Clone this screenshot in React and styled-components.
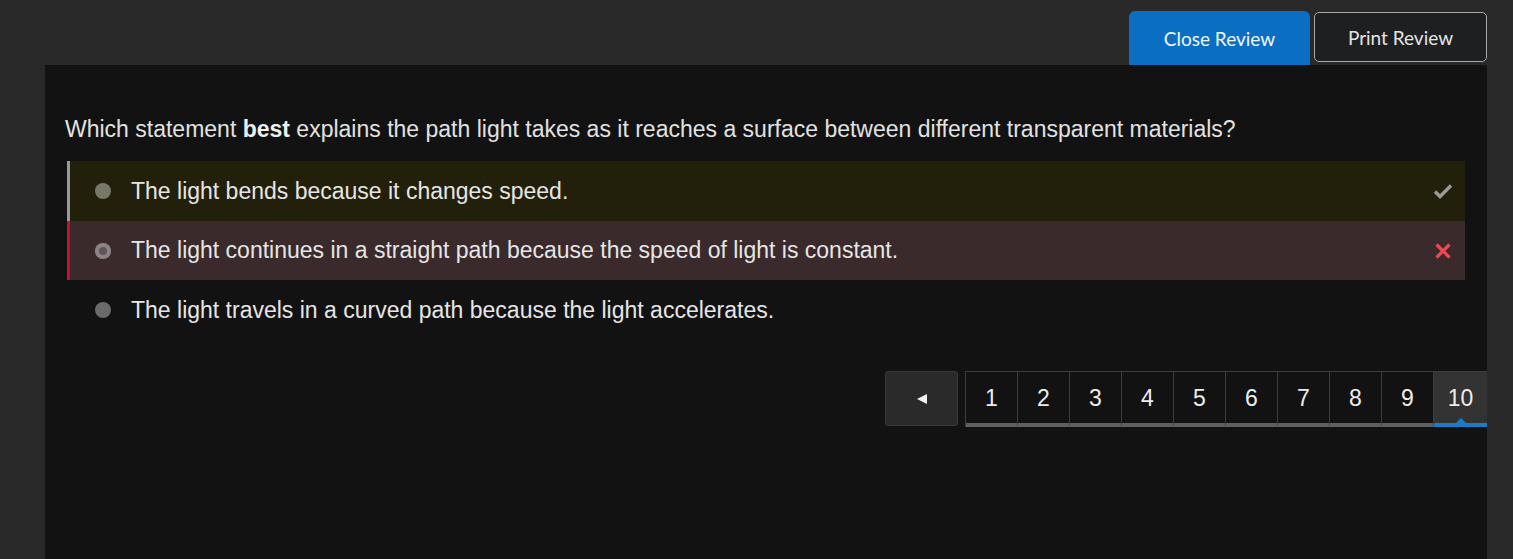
import React from 'react'
import styled, { createGlobalStyle } from 'styled-components'

const GlobalStyle = createGlobalStyle`
  html, body {
    margin: 0;
    padding: 0;
    background: #292929;
    height: 100%;
  }
  #root {
    min-height: 100%;
  }
`

const Page = styled.div`
  display: flex;
  flex-direction: column;
  min-height: 559px;
  background: #292929;
  font-family: "Liberation Sans", Arial, sans-serif;
`

const TopBar = styled.div`
  display: flex;
  justify-content: flex-end;
  align-items: flex-start;
  gap: 4px;
  padding: 11px 26px 0 0;
  height: 65px;
  box-sizing: border-box;
`

const ReviewButton = styled.button`
  font-family: Lato, "Open Sans", sans-serif;
  font-size: 19px;
  border-radius: 5px;
  cursor: pointer;
  box-sizing: border-box;
  ${p => p.primary ? `
    width: 181px;
    height: 54px;
    background: #0a6fc2;
    color: #f2f6fa;
    border: none;
    border-radius: 6px 6px 0 0;
  ` : `
    margin-top: 1px;
    width: 173px;
    height: 50px;
    background: #1e1f21;
    color: #e4e4e4;
    border: 1px solid #a8a8a8;
  `}
`

const Panel = styled.div`
  flex: 1;
  margin: 0 26px 0 45px;
  background: #121212;
  padding: 50px 22px 40px 20px;
`

const Question = styled.p`
  margin: 0 0 18px;
  font-size: 23px;
  line-height: 28px;
  color: #e2e2e2;
  b { font-weight: bold; color: #f0f0f0; }
`

const Answers = styled.div`
  display: flex;
  flex-direction: column;
  margin-left: 2px;
`

const Answer = styled.div`
  display: flex;
  align-items: center;
  height: ${p => p.h}px;
  padding: 0 12px 0 25px;
  background: ${p => p.bg || 'transparent'};
  border-left: 3px solid ${p => p.edge || 'transparent'};
  color: #e6e6e6;
  font-size: 23px;
`

const Bullet = styled.span`
  flex: none;
  width: 16px;
  height: 16px;
  border-radius: 50%;
  background: ${p => p.color};
  box-shadow: ${p => p.ring ? 'inset 0 0 0 4px #8b8385' : 'none'};
  margin-right: 20px;
`

const AnswerText = styled.span`
  flex: 1;
`

const Mark = styled.span`
  flex: none;
  width: 20px;
  height: 20px;
  display: flex;
  align-items: center;
  justify-content: center;
`

const Pager = styled.div`
  display: flex;
  justify-content: flex-end;
  align-items: flex-start;
  gap: 7px;
  margin: 31px -22px 0 0;
`

const PrevButton = styled.button`
  width: 73px;
  height: 55px;
  background: #2a2a2a;
  border: 1px solid #3a3a3a;
  border-radius: 3px;
  display: flex;
  align-items: center;
  justify-content: center;
  padding: 0;
  box-sizing: border-box;
`

const Pages = styled.div`
  display: flex;
  border-top: 1px solid #3c3c3c;
  border-left: 1px solid #3c3c3c;
`

const PageCell = styled.div`
  position: relative;
  width: 52px;
  height: 55px;
  box-sizing: border-box;
  display: flex;
  align-items: center;
  justify-content: center;
  padding-top: 2px;
  font-size: 23px;
  color: #ededed;
  background: ${p => p.active ? '#333333' : '#121212'};
  border-right: ${p => p.active ? 'none' : '1px solid #3c3c3c'};
  border-bottom: 4px solid ${p => p.active ? '#1b7bc6' : '#5f5f5f'};
  ${p => p.active ? `
    width: 53px;
    &::after {
      content: '';
      position: absolute;
      left: 50%;
      bottom: 0;
      transform: translateX(-50%);
      border-left: 5px solid transparent;
      border-right: 5px solid transparent;
      border-bottom: 5px solid #1b7bc6;
    }
  ` : ''}
`

const answers = [
  { text: 'The light bends because it changes speed.', bg: '#22200a', edge: '#9a9a9a', bullet: '#77776a', mark: 'check', h: 60 },
  { text: 'The light continues in a straight path because the speed of light is constant.', bg: '#3a2a2b', edge: '#c8102e', bullet: '#5e5658', ring: true, mark: 'cross', h: 59 },
  { text: 'The light travels in a curved path because the light accelerates.', bullet: '#6a6a6a', h: 60 },
]

const CheckIcon = () => (
  <svg width="20" height="16" viewBox="0 0 20 16">
    <path d="M2 8.5 L7 13.5 L18 2.5" fill="none" stroke="#9a9a9a" strokeWidth="3.4" />
  </svg>
)

const CrossIcon = () => (
  <svg width="18" height="18" viewBox="0 0 18 18">
    <path d="M2.5 2.5 L15.5 15.5 M15.5 2.5 L2.5 15.5" fill="none" stroke="#ee4652" strokeWidth="3.2" />
  </svg>
)

export default function App() {
  return (
    <Page>
      <GlobalStyle />
      <TopBar>
        <ReviewButton primary>Close Review</ReviewButton>
        <ReviewButton>Print Review</ReviewButton>
      </TopBar>
      <Panel>
        <Question>
          Which statement <b>best</b> explains the path light takes as it reaches a surface between different transparent materials?
        </Question>
        <Answers>
          {answers.map((a, i) => (
            <Answer key={i} bg={a.bg} edge={a.edge} h={a.h}>
              <Bullet color={a.bullet} ring={a.ring} />
              <AnswerText>{a.text}</AnswerText>
              <Mark>
                {a.mark === 'check' && <CheckIcon />}
                {a.mark === 'cross' && <CrossIcon />}
              </Mark>
            </Answer>
          ))}
        </Answers>
        <Pager>
          <PrevButton aria-label="previous">
            <svg width="14" height="14" viewBox="0 0 14 14">
              <path d="M2 7 L12 2 L12 12 Z" fill="#f2f2f2" />
            </svg>
          </PrevButton>
          <Pages>
            {[1, 2, 3, 4, 5, 6, 7, 8, 9, 10].map(n => (
              <PageCell key={n} active={n === 10}>{n}</PageCell>
            ))}
          </Pages>
        </Pager>
      </Panel>
    </Page>
  )
}
